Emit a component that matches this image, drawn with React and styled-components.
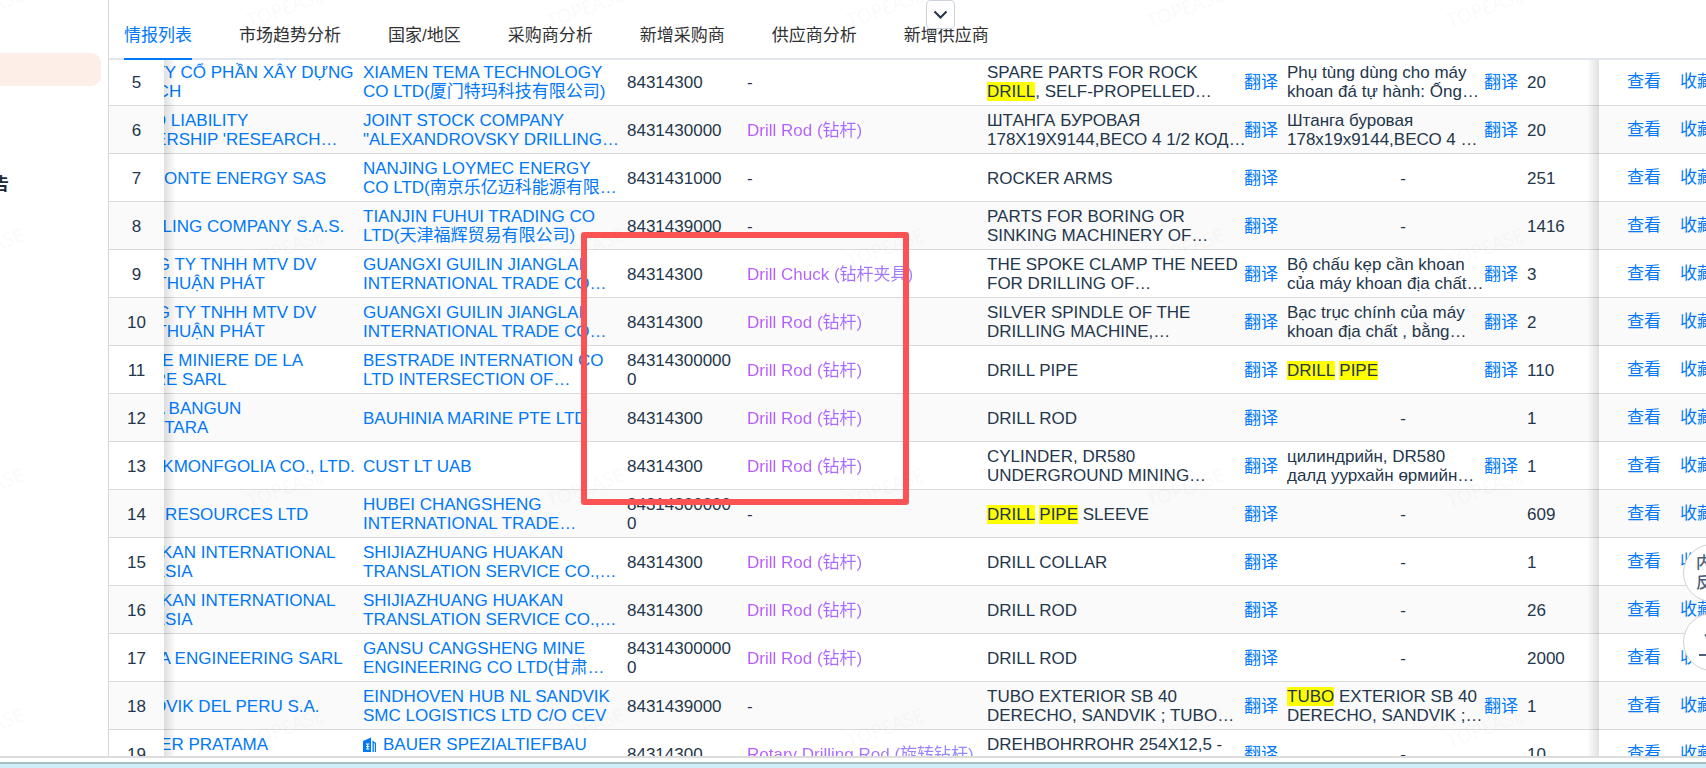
import styled, { createGlobalStyle } from 'styled-components'

const theme = {
    blue: '#0078f8',
    text: '#24364b',
    dark: '#303133',
    line: '#d9d9d9',
    font: '"Liberation Sans", Arial, "Noto Sans CJK SC", sans-serif',
}

const GlobalStyle = createGlobalStyle`
    * {
        box-sizing: border-box;
    }
    body {
        margin: 0;
        overflow: hidden;
        font-family: ${theme.font};
        font-size: 17px;
        line-height: 19px;
        color: ${theme.text};
        background: #fff;
    }
    button {
        font: inherit;
        border: 0;
        padding: 0;
        background: none;
        cursor: pointer;
    }
    a {
        color: ${theme.blue};
        text-decoration: none;
    }
`

const Page = styled.div`
    position: relative;
    display: flex;
    flex-direction: column;
    height: 100vh;
    overflow: hidden;
`

const Body = styled.div`
    display: flex;
    flex: 1;
    min-height: 0;
`

const Sidebar = styled.aside`
    flex: none;
    width: 109px;
    padding: 53px 7px 0 0;
    border-right: 1px solid ${theme.line};
    overflow: hidden;
`

const ActiveItem = styled.div`
    height: 33px;
    border-radius: 0 10px 10px 0;
    background: #fdeee8;
`

const MenuTitle = styled.div`
    display: flex;
    justify-content: flex-end;
    width: 9px;
    margin-top: 89px;
    font-weight: bold;
    color: #1b2a3a;
    white-space: nowrap;
`

const Content = styled.main`
    display: flex;
    flex-direction: column;
    flex: 1;
    min-width: 0;
`

const Tabs = styled.nav`
    display: flex;
    flex: none;
    gap: 47px;
    height: 60px;
    padding: 12px 15px 0;
    border-bottom: 2px solid #e1e5ee;
`

const Tab = styled.a`
    height: 48px;
    line-height: 48px;
    white-space: nowrap;
    color: ${props => props.$active ? theme.blue : theme.dark};
    border-bottom: 2px solid ${props => props.$active ? theme.blue : 'transparent'};
`

const Fold = styled.button`
    position: absolute;
    top: 0;
    left: 926px;
    display: flex;
    align-items: center;
    justify-content: center;
    width: 29px;
    height: 29px;
    border: 1px solid #cdd3dc;
    border-radius: 4px;
    background: #fff;
`

const Scroller = styled.div`
    flex: 1;
    min-height: 0;
    overflow: hidden;
`

const Table = styled.table`
    width: 100%;
    margin-top: -2px;
    table-layout: fixed;
    border-collapse: separate;
    border-spacing: 0;
`

const Row = styled.tr`
    background: ${props => props.$odd ? '#fff' : '#fafafa'};
`

const Cell = styled.td`
    height: 48px;
    padding: ${props => props.$single ? '2px' : '0'} 0 0 8px;
    border-bottom: 1px solid ${theme.line};
    white-space: pre;
    overflow: ${props => props.$clip ? 'hidden' : 'visible'};
`

const IndexCell = styled(Cell)`
    position: relative;
    padding: 2px 0 0;
    text-align: center;
    &::after {
        content: '';
        position: absolute;
        top: 0;
        bottom: -1px;
        left: 100%;
        width: 12px;
        background: linear-gradient(to right, rgba(0, 0, 0, 0.12), transparent);
    }
`

const ActionCell = styled(Cell)`
    position: relative;
    padding-left: 28px;
    &::before {
        content: '';
        position: absolute;
        top: 0;
        bottom: -1px;
        right: 100%;
        width: 12px;
        background: linear-gradient(to left, rgba(0, 0, 0, 0.12), transparent);
    }
`

const Actions = styled.div`
    display: flex;
    gap: 19px;
`

/* the buyer column is scrolled under the fixed index column */
const Buyer = styled.a`
    display: block;
    margin-left: -73px;
`

const Split = styled.div`
    display: flex;
    align-items: center;
    justify-content: space-between;
`

const SplitText = styled.span`
    flex: 1;
    min-width: 0;
    padding-top: ${props => props.$single ? '2px' : '0'};
`

const Empty = styled.div`
    text-align: center;
`

const Translate = styled.button`
    flex: none;
    width: 35px;
    padding-top: 2px;
    line-height: 19px;
    text-align: left;
    color: ${theme.blue};
`

const Hs = styled.div`
    white-space: normal;
    word-break: break-all;
`

const Product = styled.span`
    display: block;
    background: linear-gradient(to right, #bb55ff, #8f8fff);
    background-clip: text;
    color: transparent;
`

const Mark = styled.mark`
    background: #ff0;
    color: inherit;
`

const CompanyIcon = styled.svg`
    width: 14px;
    height: 15px;
    margin-right: 6px;
    vertical-align: -2px;
`

const Frame = styled.div`
    position: absolute;
    top: 232px;
    left: 581px;
    width: 328px;
    height: 273px;
    border: 6px solid #fb5353;
    border-radius: 3px;
    pointer-events: none;
`

const Float = styled.button`
    position: absolute;
    top: ${props => props.$top};
    right: -35px;
    display: flex;
    align-items: center;
    justify-content: center;
    width: 58px;
    height: 58px;
    border: 1px solid #cfd4da;
    border-radius: 50%;
    background: #fff;
    color: #4c6079;
    font-size: 16px;
    font-weight: 500;
    line-height: 20px;
    white-space: pre;
`

const Watermark = styled.svg`
    position: absolute;
    inset: 0;
    width: 100%;
    height: 100%;
    pointer-events: none;
`

const Footer = styled.footer`
    flex: none;
    height: 12px;
    border-top: 2px solid #dcdcdc;
    background: linear-gradient(#fff 4px, #a9bdc4 4px, #a9bdc4 6px, #d0eefa 6px);
`

const TABS = ['情报列表', '市场趋势分析', '国家/地区', '采购商分析', '新增采购商', '供应商分析', '新增供应商']

const ROD = 'Drill Rod (钻杆)'

// text between asterisks is a search hit
const ROWS = [
    { id: 5, buyer: 'CÔNG TY CỔ PHẦN XÂY DỰNG\nKIM BẠCH', seller: 'XIAMEN TEMA TECHNOLOGY\nCO LTD(厦门特玛科技有限公司)', hs: '84314300', desc: 'SPARE PARTS FOR ROCK\n*DRILL*, SELF-PROPELLED…', local: 'Phụ tùng dùng cho máy\nkhoan đá tự hành: Ống…', qty: 20 },
    { id: 6, buyer: "LIMITED LIABILITY\nPARTNERSHIP 'RESEARCH…", seller: 'JOINT STOCK COMPANY\n"ALEXANDROVSKY DRILLING…', hs: '8431430000', product: ROD, desc: 'ШТАНГА БУРОВАЯ\n178Х19Х9144,ВЕСО 4 1/2 КОД…', local: 'Штанга буровая\n178х19х9144,ВЕСО 4 …', qty: 20 },
    { id: 7, icon: true, buyer: 'VALMONTE ENERGY SAS', seller: 'NANJING LOYMEC ENERGY\nCO LTD(南京乐亿迈科能源有限…', hs: '8431431000', desc: 'ROCKER ARMS', qty: 251 },
    { id: 8, buyer: 'EL DRILLING COMPANY S.A.S.', seller: 'TIANJIN FUHUI TRADING CO\nLTD(天津福辉贸易有限公司)', hs: '8431439000', desc: 'PARTS FOR BORING OR\nSINKING MACHINERY OF…', qty: 1416 },
    { id: 9, icon: true, buyer: 'CÔNG TY TNHH MTV DV\nTM HÀ THUẬN PHÁT', seller: 'GUANGXI GUILIN JIANGLAI\nINTERNATIONAL TRADE CO…', hs: '84314300', product: 'Drill Chuck (钻杆夹具)', desc: 'THE SPOKE CLAMP THE NEED\nFOR DRILLING OF…', local: 'Bộ chấu kẹp cần khoan\ncủa máy khoan địa chất…', qty: 3 },
    { id: 10, icon: true, buyer: 'CÔNG TY TNHH MTV DV\nTM HÀ THUẬN PHÁT', seller: 'GUANGXI GUILIN JIANGLAI\nINTERNATIONAL TRADE CO…', hs: '84314300', product: ROD, desc: 'SILVER SPINDLE OF THE\nDRILLING MACHINE,…', local: 'Bạc trục chính của máy\nkhoan địa chất , bằng…', qty: 2 },
    { id: 11, buyer: 'SOCIETE MINIERE DE LA\nANGOIRE SARL', seller: 'BESTRADE INTERNATION CO\nLTD INTERSECTION OF…', hs: '843143000000', product: ROD, desc: 'DRILL PIPE', local: '*DRILL* *PIPE*', qty: 110 },
    { id: 12, buyer: 'PT RIKA BANGUN\nGUNA UTARA', seller: 'BAUHINIA MARINE PTE LTD', hs: '84314300', product: ROD, desc: 'DRILL ROD', qty: 1 },
    { id: 13, buyer: 'SANDVIKMONFGOLIA CO., LTD.', seller: 'CUST LT UAB', hs: '84314300', product: ROD, desc: 'CYLINDER, DR580\nUNDERGROUND MINING…', local: 'цилиндрийн, DR580\nдалд уурхайн өрмийн…', qty: 1 },
    { id: 14, buyer: 'MINING RESOURCES LTD', seller: 'HUBEI CHANGSHENG\nINTERNATIONAL TRADE…', hs: '843143000000', desc: '*DRILL* *PIPE* SLEEVE', qty: 609 },
    { id: 15, buyer: 'PT HUAKAN INTERNATIONAL\nINDONESIA', seller: 'SHIJIAZHUANG HUAKAN\nTRANSLATION SERVICE CO.,…', hs: '84314300', product: ROD, desc: 'DRILL COLLAR', qty: 1 },
    { id: 16, buyer: 'PT HUAKAN INTERNATIONAL\nINDONESIA', seller: 'SHIJIAZHUANG HUAKAN\nTRANSLATION SERVICE CO.,…', hs: '84314300', product: ROD, desc: 'DRILL ROD', qty: 26 },
    { id: 17, buyer: 'SAMARA ENGINEERING SARL', seller: 'GANSU CANGSHENG MINE\nENGINEERING CO LTD(甘肃…', hs: '843143000000', product: ROD, desc: 'DRILL ROD', qty: 2000 },
    { id: 18, icon: true, buyer: 'SANDVIK DEL PERU S.A.', seller: 'EINDHOVEN HUB NL SANDVIK\nSMC LOGISTICS LTD C/O CEV', hs: '8431439000', desc: 'TUBO EXTERIOR SB 40\nDERECHO, SANDVIK ; TUBO…', local: '*TUBO* EXTERIOR SB 40\nDERECHO, SANDVIK ;…', qty: 1 },
    { id: 19, buyer: 'PT BAUER PRATAMA\nINDONESIA', sellerIcon: true, seller: 'BAUER SPEZIALTIEFBAU\nGMBH', hs: '84314300', product: 'Rotary Drilling Rod (旋转钻杆)', desc: 'DREHBOHRROHR 254X12,5 -\n4000', qty: 10 },
]

const isSingle = text => !text.includes('\n')

function Building() {
    return (
        <CompanyIcon viewBox="0 0 14 15" aria-hidden="true">
            <path d="M0 4 8 0.5V15H0Z" fill={theme.blue} />
            <path d="M9.5 3.5 13 6V15H11.8V6.5L10.8 6V15H9.5Z" fill={theme.blue} />
            <path d="M3 7h3.4M3 9.5h3.4M3 12h3.4M4.7 7v5" stroke="#fff" strokeWidth="1" />
        </CompanyIcon>
    )
}

function Description({ text }) {
    return (
        <Split>
            <SplitText $single={isSingle(text)}>
                {text.split('*').map((part, i) => i % 2 ? <Mark key={i}>{part}</Mark> : part)}
            </SplitText>
            <Translate>翻译</Translate>
        </Split>
    )
}

function DataRow({ row }) {
    return (
        <Row $odd={row.id % 2 === 1}>
            <IndexCell>{row.id}</IndexCell>
            <Cell $clip $single={isSingle(row.buyer)}><Buyer href="#">{row.icon && <Building />}{row.buyer}</Buyer></Cell>
            <Cell $single={isSingle(row.seller)}><a href="#">{row.sellerIcon && <Building />}{row.seller}</a></Cell>
            <Cell $single={row.hs.length < 12}><Hs>{row.hs}</Hs></Cell>
            <Cell $single>{row.product ? <Product>{row.product}</Product> : '-'}</Cell>
            <Cell><Description text={row.desc} /></Cell>
            <Cell $single={!row.local}>{row.local ? <Description text={row.local} /> : <Empty>-</Empty>}</Cell>
            <Cell $single>{row.qty}</Cell>
            <ActionCell>
                <Actions>
                    <a href="#">查看</a>
                    <a href="#">收藏</a>
                </Actions>
            </ActionCell>
        </Row>
    )
}

export default function App() {
    return (
        <Page>
            <GlobalStyle />
            <Body>
                <Sidebar>
                    <ActiveItem />
                    <MenuTitle>报告</MenuTitle>
                </Sidebar>
                <Content>
                    <Tabs>
                        {TABS.map((name, i) => <Tab key={name} href="#" $active={i === 0}>{name}</Tab>)}
                    </Tabs>
                    <Scroller>
                        <Table>
                            <colgroup>
                                <col width="55" />
                                <col width="191" />
                                <col width="264" />
                                <col width="120" />
                                <col width="240" />
                                <col width="300" />
                                <col width="240" />
                                <col />
                                <col width="107" />
                            </colgroup>
                            <tbody>
                                {ROWS.map(row => <DataRow key={row.id} row={row} />)}
                            </tbody>
                        </Table>
                    </Scroller>
                </Content>
            </Body>
            <Footer />
            <Fold aria-label="展开">
                <svg width="15" height="10" viewBox="0 0 15 10" fill="none" stroke="#22344a" strokeWidth="2">
                    <path d="M1.5 1.5 7.5 7.5 13.5 1.5" />
                </svg>
            </Fold>
            <Frame />
            <Float $top="544px">{'内容\n反馈'}</Float>
            <Float $top="613px" aria-label="回到顶部">
                <svg width="30" height="30" viewBox="0 0 30 30" fill="none" stroke="#4c6079" strokeWidth="2">
                    <path d="M8 9 15 2 22 9M15 2V20M2 28H28" />
                </svg>
            </Float>
            <Watermark aria-hidden="true">
                <defs>
                    <pattern id="mark" width="300" height="240" patternUnits="userSpaceOnUse" x="230" y="-30">
                        <text x="20" y="58" fontFamily="Open Sans" fontSize="19" fill="#000" fillOpacity="0.02" transform="rotate(-20 20 58)">TOPEASE</text>
                    </pattern>
                </defs>
                <rect width="100%" height="100%" fill="url(#mark)" />
            </Watermark>
        </Page>
    )
}
